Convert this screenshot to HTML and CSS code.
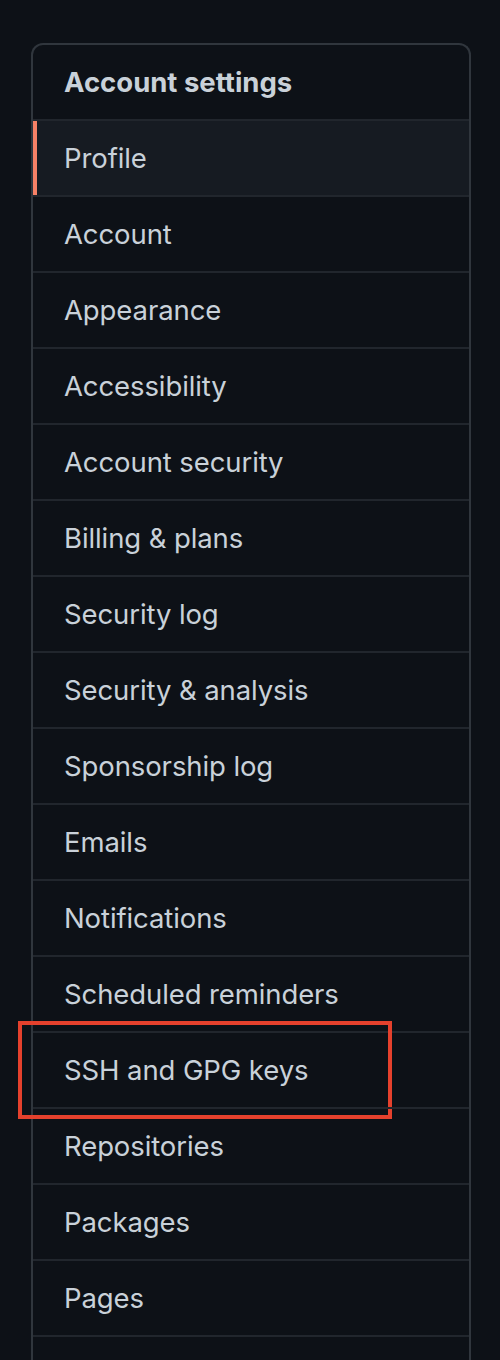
FILE: index.html
```html
<!DOCTYPE html>
<html>
<head>
	<meta charset="utf-8">
	<meta name="viewport" content="width=device-width, initial-scale=1">
	<title>Account settings</title>
	<link rel="stylesheet" href="styles.css">
</head>
<body>

<nav class="menu">
	<h2 class="menu-heading">Account settings</h2>
	<a class="menu-item selected" href="#">Profile</a>
	<a class="menu-item" href="#">Account</a>
	<a class="menu-item" href="#">Appearance</a>
	<a class="menu-item" href="#">Accessibility</a>
	<a class="menu-item" href="#">Account security</a>
	<a class="menu-item" href="#">Billing &amp; plans</a>
	<a class="menu-item" href="#">Security log</a>
	<a class="menu-item" href="#">Security &amp; analysis</a>
	<a class="menu-item" href="#">Sponsorship log</a>
	<a class="menu-item" href="#">Emails</a>
	<a class="menu-item" href="#">Notifications</a>
	<a class="menu-item" href="#">Scheduled reminders</a>
	<a class="menu-item highlight" href="#">SSH and GPG keys</a>
	<a class="menu-item" href="#">Repositories</a>
	<a class="menu-item" href="#">Packages</a>
	<a class="menu-item" href="#">Pages</a>
	<div class="menu-item menu-rest"></div>
</nav>

</body>
</html>
```

FILE: styles.css
```css
body {
	font-family: Inter, "Noto Sans", sans-serif;
	margin: 0;
	padding: 43px 0 0 31px;
	background-color: #0d1117;
	color: #c9d1d9;
}
.menu {
	width: 436px;
	border: 2px solid #30363d;
	border-bottom: 0;
	border-radius: 12px 12px 0 0;
	display: flex;
	flex-direction: column;
}
.menu-heading {
	margin: 0;
	height: 74px;
	padding-left: 31px;
	display: flex;
	align-items: center;
	font-size: 27.5px;
	font-weight: 700;
}
.menu-item {
	position: relative;
	height: 74px;
	padding-left: 31px;
	display: flex;
	align-items: center;
	border-top: 2px solid #21262d;
	color: #c9d1d9;
	font-size: 27.5px;
	letter-spacing: -0.1px;
	text-decoration: none;
}
.menu-item.selected {
	background-color: #161b22;
}
.menu-item.selected::before {
	content: "";
	position: absolute;
	left: 0;
	top: 0;
	bottom: 0;
	width: 4px;
	background-color: #f78166;
}
/* red annotation box drawn over the row */
.menu-item.highlight::after {
	content: "";
	position: absolute;
	left: -15px;
	top: -12px;
	width: 366px;
	height: 90px;
	border: 4px solid #e5412d;
}
```
